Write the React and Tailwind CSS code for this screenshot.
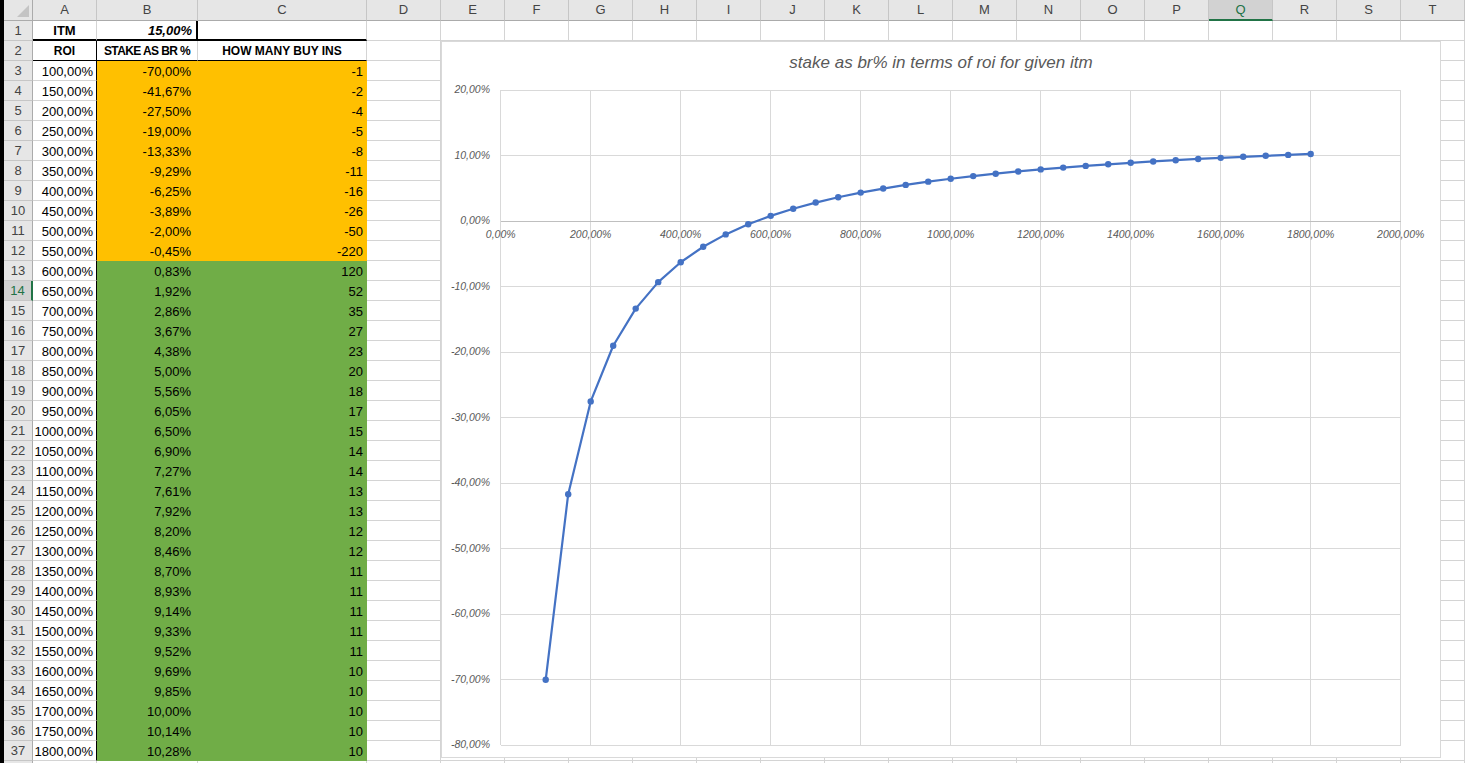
import React from 'react'

const COLS = [
  { key: 'A', w: 'w-[64px]' },
  { key: 'B', w: 'w-[101px]' },
  { key: 'C', w: 'w-[169px]' },
  { key: 'D', w: 'w-[74px]' },
  ...'EFGHIJKLMNOPQRST'.split('').map(key => ({ key, w: 'w-[64px]' }))
]

// roi %, stake as br %, buy ins
const ROWS = [
  [100, -70.0, -1], [150, -41.67, -2], [200, -27.5, -4], [250, -19.0, -5],
  [300, -13.33, -8], [350, -9.29, -11], [400, -6.25, -16], [450, -3.89, -26],
  [500, -2.0, -50], [550, -0.45, -220], [600, 0.83, 120], [650, 1.92, 52],
  [700, 2.86, 35], [750, 3.67, 27], [800, 4.38, 23], [850, 5.0, 20],
  [900, 5.56, 18], [950, 6.05, 17], [1000, 6.5, 15], [1050, 6.9, 14],
  [1100, 7.27, 14], [1150, 7.61, 13], [1200, 7.92, 13], [1250, 8.2, 12],
  [1300, 8.46, 12], [1350, 8.7, 11], [1400, 8.93, 11], [1450, 9.14, 11],
  [1500, 9.33, 11], [1550, 9.52, 11], [1600, 9.69, 10], [1650, 9.85, 10],
  [1700, 10.0, 10], [1750, 10.14, 10], [1800, 10.28, 10]
]

const pct = v => v.toFixed(2).replace('.', ',') + '%'

const GRID_R = 'border-r border-r-[#d4d4d4]'
const GRID_B = 'border-b border-b-[#d4d4d4]'

function cellProps(r, ci) {
  const col = COLS[ci].key
  let right = GRID_R
  let bottom = GRID_B
  let bg = 'bg-white'
  let extra = 'justify-end pr-[3px]'
  let text = ''

  if (r === 1) {
    if (col === 'A') { text = 'ITM'; extra = 'justify-center font-bold' }
    if (col === 'B') { text = '15,00%'; extra = 'justify-end pr-[4px] font-bold italic'; right = 'border-r-2 border-r-black' }
    if (col === 'A' || col === 'B' || col === 'C') bottom = 'border-b-2 border-b-black'
  } else if (r === 2) {
    if (col === 'A') { text = 'ROI'; right = 'border-r border-r-black' }
    if (col === 'B') text = 'STAKE AS BR %'
    if (col === 'C') text = 'HOW MANY BUY INS'
    if (col === 'A' || col === 'B' || col === 'C') {
      bottom = 'border-b border-b-black'
      extra = col === 'B'
        ? 'justify-center font-bold text-[12px] tracking-[-0.6px]'
        : 'justify-center font-bold text-[12px]'
    }
  } else if (r >= 3 && r <= 37) {
    const [roi, stake, buy] = ROWS[r - 3]
    const orange = stake < 0
    if (col === 'A') { text = pct(roi); right = 'border-r border-r-black' }
    if (col === 'B' || col === 'C') {
      bg = orange ? 'bg-[#ffc000]' : 'bg-[#70ad47]'
      right = orange ? 'border-r border-r-[#ffc000]' : 'border-r border-r-[#70ad47]'
      bottom = orange ? 'border-b border-b-[#ffc000]' : 'border-b border-b-[#70ad47]'
    }
    if (col === 'B') { text = pct(stake); extra = 'justify-end pr-[6px]' }
    if (col === 'C') { text = String(buy); extra = 'justify-end pr-[3px]' }
  }
  return { cls: `${COLS[ci].w} ${right} ${bottom} ${bg} ${extra}`, text }
}

function ColumnHeader() {
  return (
    <div className="flex h-[21px]">
      <div className="w-[29px] h-full bg-[#e6e6e6] border-r border-r-[#ababab] border-b border-b-[#ababab] relative">
        <svg className="absolute right-[3px] bottom-[3px]" width="12" height="12" viewBox="0 0 12 12">
          <polygon points="12,0 12,12 0,12" fill="#c4c4c4" />
        </svg>
      </div>
      {COLS.map(c => (
        c.key === 'Q' ? (
          <div key={c.key} className={`${c.w} h-full bg-[#d2d2d2] border-r border-r-[#c6c6c6] border-b-2 border-b-[#217346] flex items-center justify-center text-[#217346]`}>
            {c.key}
          </div>
        ) : (
          <div key={c.key} className={`${c.w} h-full bg-[#e6e6e6] border-r border-r-[#c6c6c6] border-b border-b-[#ababab] flex items-center justify-center text-[#444444]`}>
            {c.key}
          </div>
        )
      ))}
    </div>
  )
}

function SheetRow({ r }) {
  const selected = r === 14
  return (
    <div className="flex h-[20px]">
      {selected ? (
        <div className="w-[29px] h-full bg-[#d2d2d2] border-r-2 border-r-[#217346] border-b border-b-[#c6c6c6] flex items-center justify-center text-[#217346]">
          {r}
        </div>
      ) : (
        <div className="w-[29px] h-full bg-[#e6e6e6] border-r border-r-[#ababab] border-b border-b-[#c6c6c6] flex items-center justify-center text-[#444444]">
          {r}
        </div>
      )}
      {COLS.map((c, ci) => {
        const { cls, text } = cellProps(r, ci)
        return (
          <div key={c.key} className={`${cls} h-full flex items-end pb-[1px] leading-[15px] whitespace-nowrap overflow-hidden text-black`}>
            {text}
          </div>
        )
      })}
    </div>
  )
}

// the sliver of row 38 that shows under the last full row
function PartialRow() {
  return (
    <div className="flex h-[2px]">
      <div className="w-[29px] h-full bg-[#e6e6e6] border-r border-r-[#ababab]" />
      {COLS.map(c => (
        <div key={c.key} className={`${c.w} h-full bg-white border-r border-r-[#d4d4d4]`} />
      ))}
    </div>
  )
}

// chart geometry, local to the chart box
const X0 = 59.7
const Y0 = 180.3
const SX = 0.45
const SY = 6.55
const px = r => X0 + r * SX
const py = v => Y0 - v * SY

function Chart() {
  const yTicks = [20, 10, 0, -10, -20, -30, -40, -50, -60, -70, -80]
  const xTicks = [0, 200, 400, 600, 800, 1000, 1200, 1400, 1600, 1800, 2000]
  const points = ROWS.map(([roi, s]) => `${px(roi)},${py(s)}`).join(' ')

  return (
    <div className="absolute left-[441px] top-[41px] w-[1000px] h-[717px] bg-white border border-[#d9d9d9]">
      <div className="pt-[10px] text-center italic text-[17px] leading-[22px] text-[#595959] font-['Liberation_Sans',Arial,sans-serif]">
        stake as br% in terms of roi for given itm
      </div>
      <svg className="absolute -left-px -top-px" width="1000" height="717" viewBox="0 0 1000 717">
        <g shapeRendering="crispEdges">
          {xTicks.map(r => (
            <line key={r} x1={px(r)} x2={px(r)} y1={py(20)} y2={py(-80)} stroke="#d9d9d9" strokeWidth="1" />
          ))}
          {yTicks.map(v => (
            <line key={v} x1={px(0)} x2={px(2000)} y1={py(v)} y2={py(v)} stroke={v === 0 ? '#bfbfbf' : '#d9d9d9'} strokeWidth="1" />
          ))}
        </g>
        <g fontFamily="'Liberation Sans', Arial, sans-serif" fontSize="10.5" fontStyle="italic" fill="#595959">
          {yTicks.map(v => (
            <text key={v} x={49} y={py(v)} textAnchor="end" dominantBaseline="middle">{pct(v)}</text>
          ))}
          {xTicks.map(r => (
            <text key={r} x={px(r)} y={Y0 + 14} textAnchor="middle" dominantBaseline="middle">{pct(r)}</text>
          ))}
        </g>
        <polyline points={points} fill="none" stroke="#4472c4" strokeWidth="2.2" strokeLinejoin="round" />
        {ROWS.map(([roi, s]) => (
          <circle key={roi} cx={px(roi)} cy={py(s)} r="3.2" fill="#4472c4" />
        ))}
      </svg>
    </div>
  )
}

export default function App() {
  const rows = Array.from({ length: 37 }, (_, i) => i + 1)
  return (
    <div className="relative w-[1465px] h-[763px] overflow-hidden bg-white flex font-['Liberation_Sans',Arial,sans-serif] text-[13px]">
      <div className="w-[4px] h-full bg-black shrink-0" />
      <div className="flex flex-col">
        <ColumnHeader />
        {rows.map(r => <SheetRow key={r} r={r} />)}
        <PartialRow />
      </div>
      <Chart />
    </div>
  )
}
